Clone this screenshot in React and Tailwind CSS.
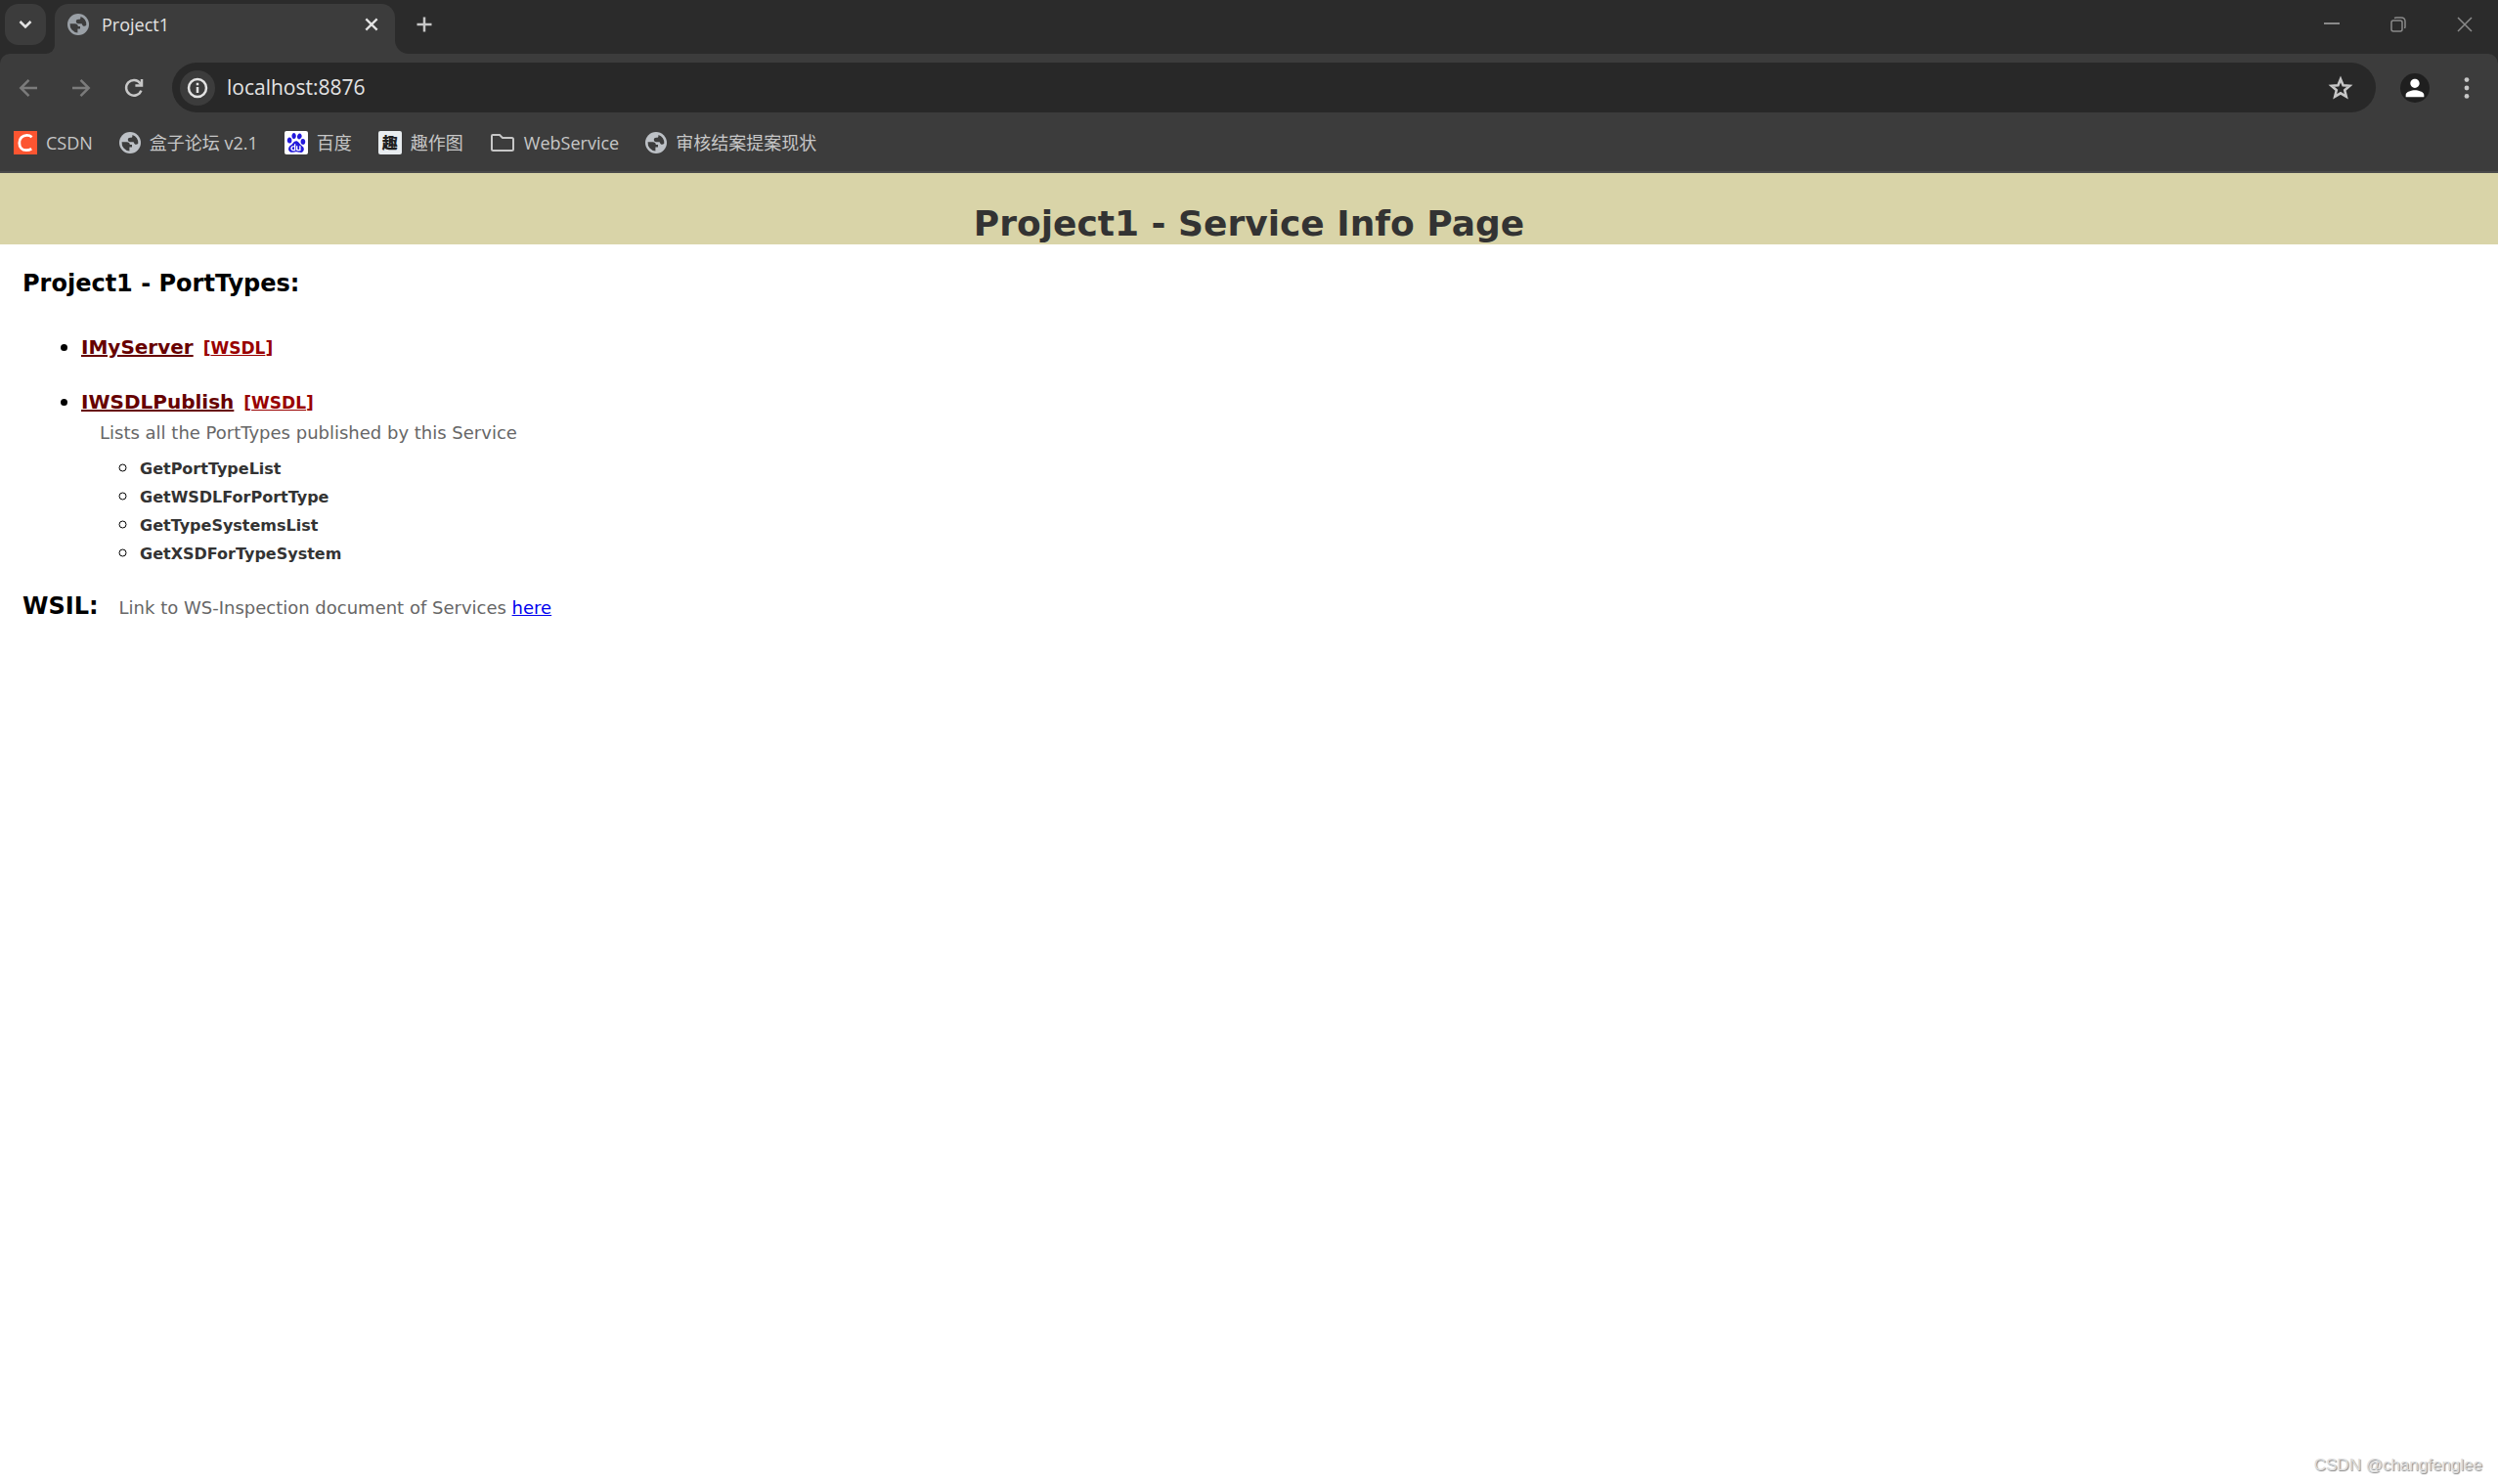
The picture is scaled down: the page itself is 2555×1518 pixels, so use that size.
import React from 'react';
import { MdPerson } from 'react-icons/md';
import { SiBaidu } from 'react-icons/si';

const UI_FONT = "font-['Open_Sans','Noto_Sans_CJK_SC',sans-serif]";

const LineIcon = ({ className = 'size-6', width = 2.5, children }) => (
    <svg viewBox="0 0 24 24" className={className} fill="none" stroke="currentColor" strokeWidth={width} aria-hidden="true">
        {children}
    </svg>
);

const GlobeIcon = ({ className }) => (
    <svg viewBox="0 0 22 22" className={className} aria-hidden="true">
        <circle cx="11" cy="11" r="11" fill="currentColor" />
        <path
            d="M2.6 10.2 H7.6 C9.6 10.2 10.8 11.2 10.8 13 H13 V15.4 H10.4 V19.4 A8.4 8.4 0 0 1 2.6 10.2 Z"
            fill="#3c3c3c"
        />
        <path
            d="M13.4 3 A8.4 8.4 0 0 1 19.3 11.8 C18 13.2 15.8 13 15.2 11.4 L14.6 10.2 H11.2 C9.6 10.2 8.8 9.2 8.8 7.8 C8.8 6.6 9.8 5.8 11.2 5.8 H12.4 C13.2 5.6 13.6 4.6 13.4 3 Z"
            fill="#3c3c3c"
        />
    </svg>
);

const CsdnIcon = () => (
    <svg viewBox="0 0 24 24" className="size-6" aria-hidden="true">
        <rect width="24" height="24" fill="#fc5531" />
        <path
            d="M18.6 6.2 C17 4.8 15.4 4.4 13.4 4.4 C9 4.4 5.8 7.6 5.8 12.2 C5.8 16.6 8.4 19.6 12.8 19.6 C15 19.6 16.6 19.2 18.2 18.2"
            fill="none"
            stroke="#fff"
            strokeWidth="2.8"
        />
    </svg>
);

const BaiduIcon = () => (
    <span className="flex size-6 items-center justify-center rounded-xs bg-white text-[#2319dc]">
        <SiBaidu className="size-5" />
    </span>
);

const QuIcon = () => (
    <span className="flex size-6 items-center justify-center rounded-xs bg-[#e8ecef] text-base leading-none font-black text-[#1f1f1f]">
        趣
    </span>
);

const FolderIcon = () => (
    <svg viewBox="0 0 26 20" className="h-5 w-[26px]" fill="none" stroke="currentColor" strokeWidth="2" aria-hidden="true">
        <path d="M3 2 H10 L13 5 H22.5 Q24 5 24 6.5 V16.5 Q24 18 22.5 18 H3.5 Q2 18 2 16.5 V3 Q2 2 3 2 Z" />
    </svg>
);

const bookmarks = [
    { label: 'CSDN', icon: <CsdnIcon /> },
    { label: '盒子论坛 v2.1', icon: <GlobeIcon className="size-[22px] text-[#bdc1c6]" /> },
    { label: '百度', icon: <BaiduIcon /> },
    { label: '趣作图', icon: <QuIcon /> },
    { label: 'WebService', icon: <FolderIcon /> },
    { label: '审核结案提案现状', icon: <GlobeIcon className="size-[22px] text-[#bdc1c6]" /> },
];

const portTypes = [
    { name: 'IMyServer', methods: [] },
    {
        name: 'IWSDLPublish',
        description: 'Lists all the PortTypes published by this Service',
        methods: ['GetPortTypeList', 'GetWSDLForPortType', 'GetTypeSystemsList', 'GetXSDForTypeSystem'],
    },
];

const TabStrip = () => (
    <div className="flex h-[55px] items-start justify-between bg-[#2b2b2b] pt-1">
        <div className="flex">
            <button aria-label="Search tabs" className="ml-[5px] flex size-[42px] items-center justify-center rounded-[14px] bg-[#3c3c3c] text-[#e3e3e3]">
                <LineIcon><path d="M6.5 9 L12 14.500 L17.5 9" /></LineIcon>
            </button>
            <div className="h-[51px] w-[9px] bg-[#3c3c3c]">
                <span className="block h-full w-full rounded-br-[9px] bg-[#2b2b2b]" />
            </div>
            <div className="h-[51px] w-[348px] rounded-t-[14px] bg-[#3c3c3c] px-[13px]">
                <div className="flex h-[42px] items-center gap-[13px]">
                    <GlobeIcon className="size-[22px] text-[#9aa0a6]" />
                    <span className="grow text-lg text-[#e3e3e3]">Project1</span>
                    <button aria-label="Close tab" className="text-[#e3e3e3]">
                        <LineIcon className="size-[22px]"><path d="M5.8 5.8 L18.2 18.2 M18.2 5.8 L5.8 18.2" /></LineIcon>
                    </button>
                </div>
            </div>
            <div className="h-[51px] w-4 bg-[#3c3c3c]">
                <span className="block h-full w-full rounded-bl-[14px] bg-[#2b2b2b]" />
            </div>
            <button aria-label="New tab" className="flex h-[42px] w-7 items-center justify-center text-[#c7c7c7]">
                <LineIcon><path d="M12 4.5 V19.5 M4.5 12 H19.5" /></LineIcon>
            </button>
        </div>
        <div className="flex h-[42px] items-center text-[#8a8a8a]">
            <button aria-label="Minimize" className="flex w-[68px] justify-center">
                <svg viewBox="0 0 16 16" className="size-4" stroke="currentColor" strokeWidth="2">
                    <path d="M0 7 H16" />
                </svg>
            </button>
            <button aria-label="Restore" className="flex w-[68px] justify-center">
                <svg viewBox="0 0 16 16" className="size-4" fill="none" stroke="currentColor" strokeWidth="1.5">
                    <rect x="1" y="4" width="11" height="11" rx="2" />
                    <path d="M4 1.5 Q5 1 6 1 H11 Q15 1 15 5 V10 Q15 11 14.5 12" />
                </svg>
            </button>
            <button aria-label="Close" className="flex w-[68px] justify-center">
                <svg viewBox="0 0 16 16" className="size-4" stroke="currentColor" strokeWidth="1.5">
                    <path d="M1 1 L15 15 M15 1 L1 15" />
                </svg>
            </button>
        </div>
    </div>
);

const Toolbar = () => (
    <div className="bg-[#2b2b2b]">
        <div className="flex h-[69px] items-center rounded-t-[10px] bg-[#3c3c3c] pr-5 pl-[17px]">
            <div className="flex gap-[30px]">
                <button aria-label="Back" className="text-[#7b7b7b]">
                    <LineIcon><path d="M21 12 H4.5 M12.5 3.8 L4.3 12 L12.5 20.2" /></LineIcon>
                </button>
                <button aria-label="Forward" className="text-[#7b7b7b]">
                    <LineIcon><path d="M3 12 H19.5 M11.5 3.8 L19.7 12 L11.5 20.2" /></LineIcon>
                </button>
                <button aria-label="Reload" className="text-[#c7c7c7]">
                    <LineIcon>
                        <path d="M19.4 14.6 A7.9 7.9 0 1 1 18.4 7.2 L20 9" />
                        <path d="M20 3 V9.6 H13.400" />
                    </LineIcon>
                </button>
            </div>
            <div className="ml-[27px] flex h-[51px] grow items-center rounded-full bg-[#282828] pr-[22px] pl-2">
                <button aria-label="Site information" className="flex size-9 items-center justify-center rounded-full bg-[#3c3c3c] text-[#e3e3e3]">
                    <LineIcon>
                        <circle cx="12" cy="12" r="9" />
                        <path d="M12 11 V17 M12 6.8 V9.2" />
                    </LineIcon>
                </button>
                <input
                    aria-label="Address"
                    defaultValue="localhost:8876"
                    className="ml-3 grow bg-transparent text-[21px] text-[#e3e3e3] outline-none"
                />
                <button aria-label="Bookmark this page" className="text-[#c7c7c7]">
                    <LineIcon className="size-7" width={2.2}>
                        <path d="M12 4.2 L14.2 9.6 L20 10.1 L15.6 13.9 L17 19.600 L12 16.600 L7 19.600 L8.4 13.900 L4 10.1 L9.8 9.6 Z" />
                    </LineIcon>
                </button>
            </div>
            <button aria-label="Profile" className="ml-[25px] flex size-[30px] items-center justify-center rounded-full bg-[#1f1f1f] text-white">
                <MdPerson className="size-7" />
            </button>
            <button aria-label="Menu" className="ml-[26px] text-[#c7c7c7]">
                <svg viewBox="0 0 24 24" className="size-6" fill="currentColor" aria-hidden="true">
                    <circle cx="12" cy="3.6" r="2.4" />
                    <circle cx="12" cy="12" r="2.4" />
                    <circle cx="12" cy="20.4" r="2.4" />
                </svg>
            </button>
        </div>
    </div>
);

const BookmarkBar = () => (
    <nav className="flex h-[53px] items-center gap-[27px] border-b-2 border-[#4a4a4a] bg-[#3c3c3c] px-[14px] pb-[7px]">
        {bookmarks.map(b => (
            <a key={b.label} href="#" className="flex items-center gap-[9px] text-lg text-[#c7c7c7]">
                {b.icon}
                {b.label}
            </a>
        ))}
    </nav>
);

// Bullets scale with the list item's own size, so items stay at text-2xl
const PortType = ({ name, description, methods }) => (
    <li>
        <a href="#" className="text-xl leading-none font-bold text-[#660000] underline">{name}</a>
        <span className="ml-[10px] text-[17px] leading-none font-bold text-[#990000]">
            [<a href="#" className="underline">WSDL</a>]
        </span>
        {description && <p className="mt-[3px] pl-[19px] text-lg text-[#666666]">{description}</p>}
        {methods.length > 0 && (
            <ul className="mt-[6px] list-[circle] pl-[60px] text-2xl leading-[29px]">
                {methods.map(m => (
                    <li key={m}><span className="text-base leading-none font-bold text-[#333333]">{m}</span></li>
                ))}
            </ul>
        )}
    </li>
);

const ServicePage = () => (
    <main className="font-['Verdana','DejaVu_Sans',sans-serif] text-black">
        <div className="flex h-[73px] items-end justify-center bg-[#d9d4a8]">
            <h1 className="text-4xl leading-[42px] font-bold text-[#333333]">Project1 - Service Info Page</h1>
        </div>
        <div className="px-[23px] pt-6">
            <h2 className="text-2xl font-bold">Project1 - PortTypes:</h2>
            <ul className="mt-8 flex list-disc flex-col gap-6 pl-[60px] text-2xl">
                {portTypes.map(p => <PortType key={p.name} {...p} />)}
            </ul>
            <div className="mt-[25px] flex items-baseline gap-[21px]">
                <h2 className="text-2xl font-bold">WSIL:</h2>
                <p className="text-lg text-[#666666]">
                    Link to WS-Inspection document of Services <a href="#" className="text-[#0000ee] underline">here</a>
                </p>
            </div>
        </div>
    </main>
);

const App = () => (
    <div className="flex min-h-screen flex-col bg-white">
        <header className={UI_FONT}>
            <TabStrip />
            <Toolbar />
            <BookmarkBar />
        </header>
        <ServicePage />
        <footer className="mt-auto px-4 pb-[7px] text-right font-['Liberation_Sans',sans-serif] text-[17px] text-[#dddddd] [text-shadow:1px_1px_1px_#888888]">
            CSDN @changfenglee
        </footer>
    </div>
);

export default App;
